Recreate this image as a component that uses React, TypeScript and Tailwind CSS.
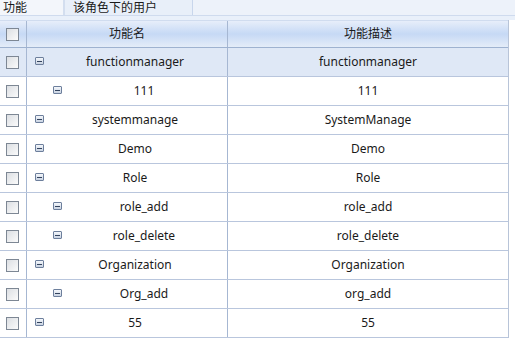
import React from "react";

const rows: { name: string; desc: string; level: number; selected?: boolean }[] = [
  { name: "functionmanager", desc: "functionmanager", level: 0, selected: true },
  { name: "111", desc: "111", level: 1 },
  { name: "systemmanage", desc: "SystemManage", level: 0 },
  { name: "Demo", desc: "Demo", level: 0 },
  { name: "Role", desc: "Role", level: 0 },
  { name: "role_add", desc: "role_add", level: 1 },
  { name: "role_delete", desc: "role_delete", level: 1 },
  { name: "Organization", desc: "Organization", level: 0 },
  { name: "Org_add", desc: "org_add", level: 1 },
  { name: "55", desc: "55", level: 0 },
];

function CheckBox() {
  return (
    <div className="w-[13px] h-[13px] border border-[#7d8794] bg-gradient-to-br from-[#dcdfe3] to-[#fbfbfb]" />
  );
}

function Minus() {
  return (
    <div className="w-[9px] h-[8px] border border-[#6d7f9c] rounded-[1px] bg-gradient-to-b from-[#f4f7fb] to-[#c9d3e2] flex items-center justify-center">
      <div className="w-[5px] h-px bg-[#34445e]" />
    </div>
  );
}

export default function App() {
  return (
    <div
      className="w-[515px] h-[355px] bg-white text-[12px] text-[#1a1a1a] overflow-hidden"
      style={{ fontFamily: '"Noto Sans", "Noto Sans CJK SC", sans-serif' }}
    >
      {/* tabs */}
      <div className="h-[16px] flex bg-[#e4ecf8] border-b border-[#cfdbee]">
        <div className="w-[63px] bg-[#f3f6fb] pl-[3px] leading-[15px] text-[12px]">功能</div>
        <div className="w-[2px] bg-[#d3deef]" />
        <div className="w-[128px] bg-[#e8eff9] pl-[8px] leading-[15px] border-r border-[#c8d6ec]">该角色下的用户</div>
        <div className="flex-1 bg-[#edf2fa]" />
      </div>
      <div className="h-[4px] bg-[#e9f0fa]" />
      {/* table */}
      <div className="w-[509px] border-r border-[#b8c4d8]">
        <div className="h-[28px] flex bg-gradient-to-b from-[#e7eefa] via-[#c6d9f5] to-[#e4ecf8] border-b border-[#9eb2d0] border-t border-t-[#d0dcef]">
          <div className="w-[27px] shrink-0 border-r border-[#a6b7d2] flex items-center justify-center pr-[2px]">
            <CheckBox />
          </div>
          <div className="w-[201px] shrink-0 border-r border-[#a6b7d2] flex items-center justify-center">功能名</div>
          <div className="flex-1 flex items-center justify-center">功能描述</div>
        </div>
        {rows.map((r, i) => (
          <div
            key={i}
            className={`h-[29px] flex border-b border-[#b9c6dd] ${r.selected ? "bg-[#dfe8f6]" : "bg-white"}`}
          >
            <div className="w-[27px] shrink-0 border-r border-[#a6b7d2] flex items-center justify-center pr-[2px]">
              <CheckBox />
            </div>
            <div
              className={`w-[201px] shrink-0 border-r border-[#a6b7d2] relative flex items-center justify-center ${
                r.level === 1 ? "pl-[34px]" : "pl-[16px]"
              }`}
            >
              <div className={`absolute top-[9px] ${r.level === 1 ? "left-[26px]" : "left-[8px]"}`}>
                <Minus />
              </div>
              <span>{r.name}</span>
            </div>
            <div className="flex-1 flex items-center justify-center">{r.desc}</div>
          </div>
        ))}
      </div>
    </div>
  );
}
